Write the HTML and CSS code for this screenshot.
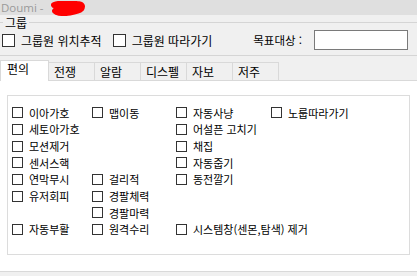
FILE: index.html
```html
<!DOCTYPE html>
<html lang="ko">

<head>
    <meta charset="UTF-8">
    <title>Doumi</title>
    <link rel="stylesheet" href="styles.css">
</head>

<body>
    <!-- 타이틀 바 -->
    <div class="titlebar">
        <span class="title">Doumi -</span>
        <svg class="scribble" width="36" height="15" viewBox="0 0 36 15">
            <path d="M4 4 C10 2 18 2 27 3 C32 3 33 5 31 8 C28 11 22 11 16 12 C10 12 7 12 5 10 C6 7 14 7 24 6"
                fill="#ff0000" stroke="#ff0000" stroke-width="6" stroke-linecap="round" stroke-linejoin="round" />
        </svg>
    </div>

    <!-- 그룹 -->
    <fieldset class="group">
        <legend>그룹</legend>
        <div class="group-row">
            <label class="check big"><span class="box"></span>그룹원 위치추적</label>
            <label class="check big"><span class="box"></span>그룹원 따라가기</label>
            <div class="target">
                <span>목표대상 :</span>
                <input type="text" class="target-input">
            </div>
        </div>
    </fieldset>

    <!-- 탭 -->
    <div class="tabs">
        <div class="tab active">편의</div>
        <div class="tab">전쟁</div>
        <div class="tab">알람</div>
        <div class="tab">디스펠</div>
        <div class="tab">자보</div>
        <div class="tab">저주</div>
    </div>

    <div class="panel">
        <div class="options">
            <label class="check"><span class="box"></span>이아가호</label>
            <label class="check"><span class="box"></span>맵이동</label>
            <label class="check"><span class="box"></span>자동사냥</label>
            <label class="check"><span class="box"></span>노룹따라가기</label>

            <label class="check"><span class="box"></span>세토아가호</label>
            <span></span>
            <label class="check"><span class="box"></span>어설픈 고치기</label>
            <span></span>

            <label class="check"><span class="box"></span>모션제거</label>
            <span></span>
            <label class="check"><span class="box"></span>채집</label>
            <span></span>

            <label class="check"><span class="box"></span>센서스핵</label>
            <span></span>
            <label class="check"><span class="box"></span>자동줍기</label>
            <span></span>

            <label class="check"><span class="box"></span>연막무시</label>
            <label class="check"><span class="box"></span>걸리적</label>
            <label class="check"><span class="box"></span>동전깔기</label>
            <span></span>

            <label class="check"><span class="box"></span>유저회피</label>
            <label class="check"><span class="box"></span>경팔체력</label>
            <span></span>
            <span></span>

            <span></span>
            <label class="check"><span class="box"></span>경팔마력</label>
            <span></span>
            <span></span>

            <label class="check"><span class="box"></span>자동부활</label>
            <label class="check"><span class="box"></span>원격수리</label>
            <label class="check wide"><span class="box"></span>시스템창(센몬,탐색) 제거</label>
        </div>
    </div>
</body>

</html>
```

FILE: styles.css
```css
/* 전체 */
body {
    margin: 0;
    background-color: #f0f0f0;
    font-family: "Noto Sans CJK KR", "Liberation Sans", sans-serif;
    font-size: 11px;
    color: #000;
    overflow: hidden;
}

/* 타이틀 바 */
.titlebar {
    height: 15px;
    background-color: #dfdfdf;
    display: flex;
    align-items: flex-start;
}

.title {
    font-family: "Open Sans", "Liberation Sans", sans-serif;
    font-size: 11.5px;
    line-height: 15px;
    color: #9a9a9a;
    margin-left: 1px;
}

.scribble {
    margin-left: 6px;
    margin-top: 1px;
    flex: none;
}

/* 그룹 박스 */
.group {
    margin: 0;
    padding: 0 0 5px 2px;
    border: 1px solid #d5d5d5;
    border-left: none;
    border-right: none;
}

.group legend {
    padding: 1px 2px 0 2px;
    margin-left: 1px;
    font-size: 12px;
    line-height: 14px;
}

.group-row {
    display: flex;
    align-items: center;
    height: 20px;
}

.check {
    display: flex;
    align-items: center;
    white-space: nowrap;
}

.box {
    box-sizing: border-box;
    width: 11px;
    height: 11px;
    border: 1px solid #333;
    background-color: #fff;
    margin-right: 6px;
    flex: none;
}

.check.big {
    font-size: 12px;
    margin-right: 11px;
}

.check.big .box {
    width: 13px;
    height: 13px;
    margin-right: 6px;
}

.target {
    display: flex;
    align-items: center;
    margin-left: auto;
    margin-right: 9px;
    font-size: 11.5px;
}

.target-input {
    box-sizing: border-box;
    width: 94px;
    height: 20px;
    margin: 0 0 0 12px;
    border: 1px solid #7a7a7a;
    background-color: #fff;
    padding: 0;
}

/* 탭 */
.tabs {
    display: flex;
    align-items: flex-end;
    height: 20px;
    margin-top: 4px;
}

.tab {
    box-sizing: border-box;
    width: 47px;
    height: 18px;
    padding-left: 5px;
    border: 1px solid #d9d9d9;
    border-bottom: none;
    margin-left: -1px;
    background-color: #f0f0f0;
    font-size: 12px;
    line-height: 17px;
}

.tab.active {
    width: 49px;
    height: 21px;
    margin-left: 0;
    margin-bottom: -1px;
    padding-left: 6px;
    background-color: #fff;
    line-height: 16px;
    position: relative;
}

/* 탭 내용 */
.panel {
    box-sizing: border-box;
    height: 192px;
    background-color: #fff;
    border-top: 1px solid #d9d9d9;
    border-bottom: 1px solid #d9d9d9;
    padding: 14px 7px 0 7px;
}

.options {
    box-sizing: border-box;
    height: 160px;
    border: 1px solid #dcdcdc;
    padding: 8.5px 0 0 4px;
    display: grid;
    grid-template-columns: 80px 84px 95px auto;
    grid-auto-rows: 16.7px;
    line-height: 16.7px;
}

.check.wide {
    grid-column: span 2;
}
```
